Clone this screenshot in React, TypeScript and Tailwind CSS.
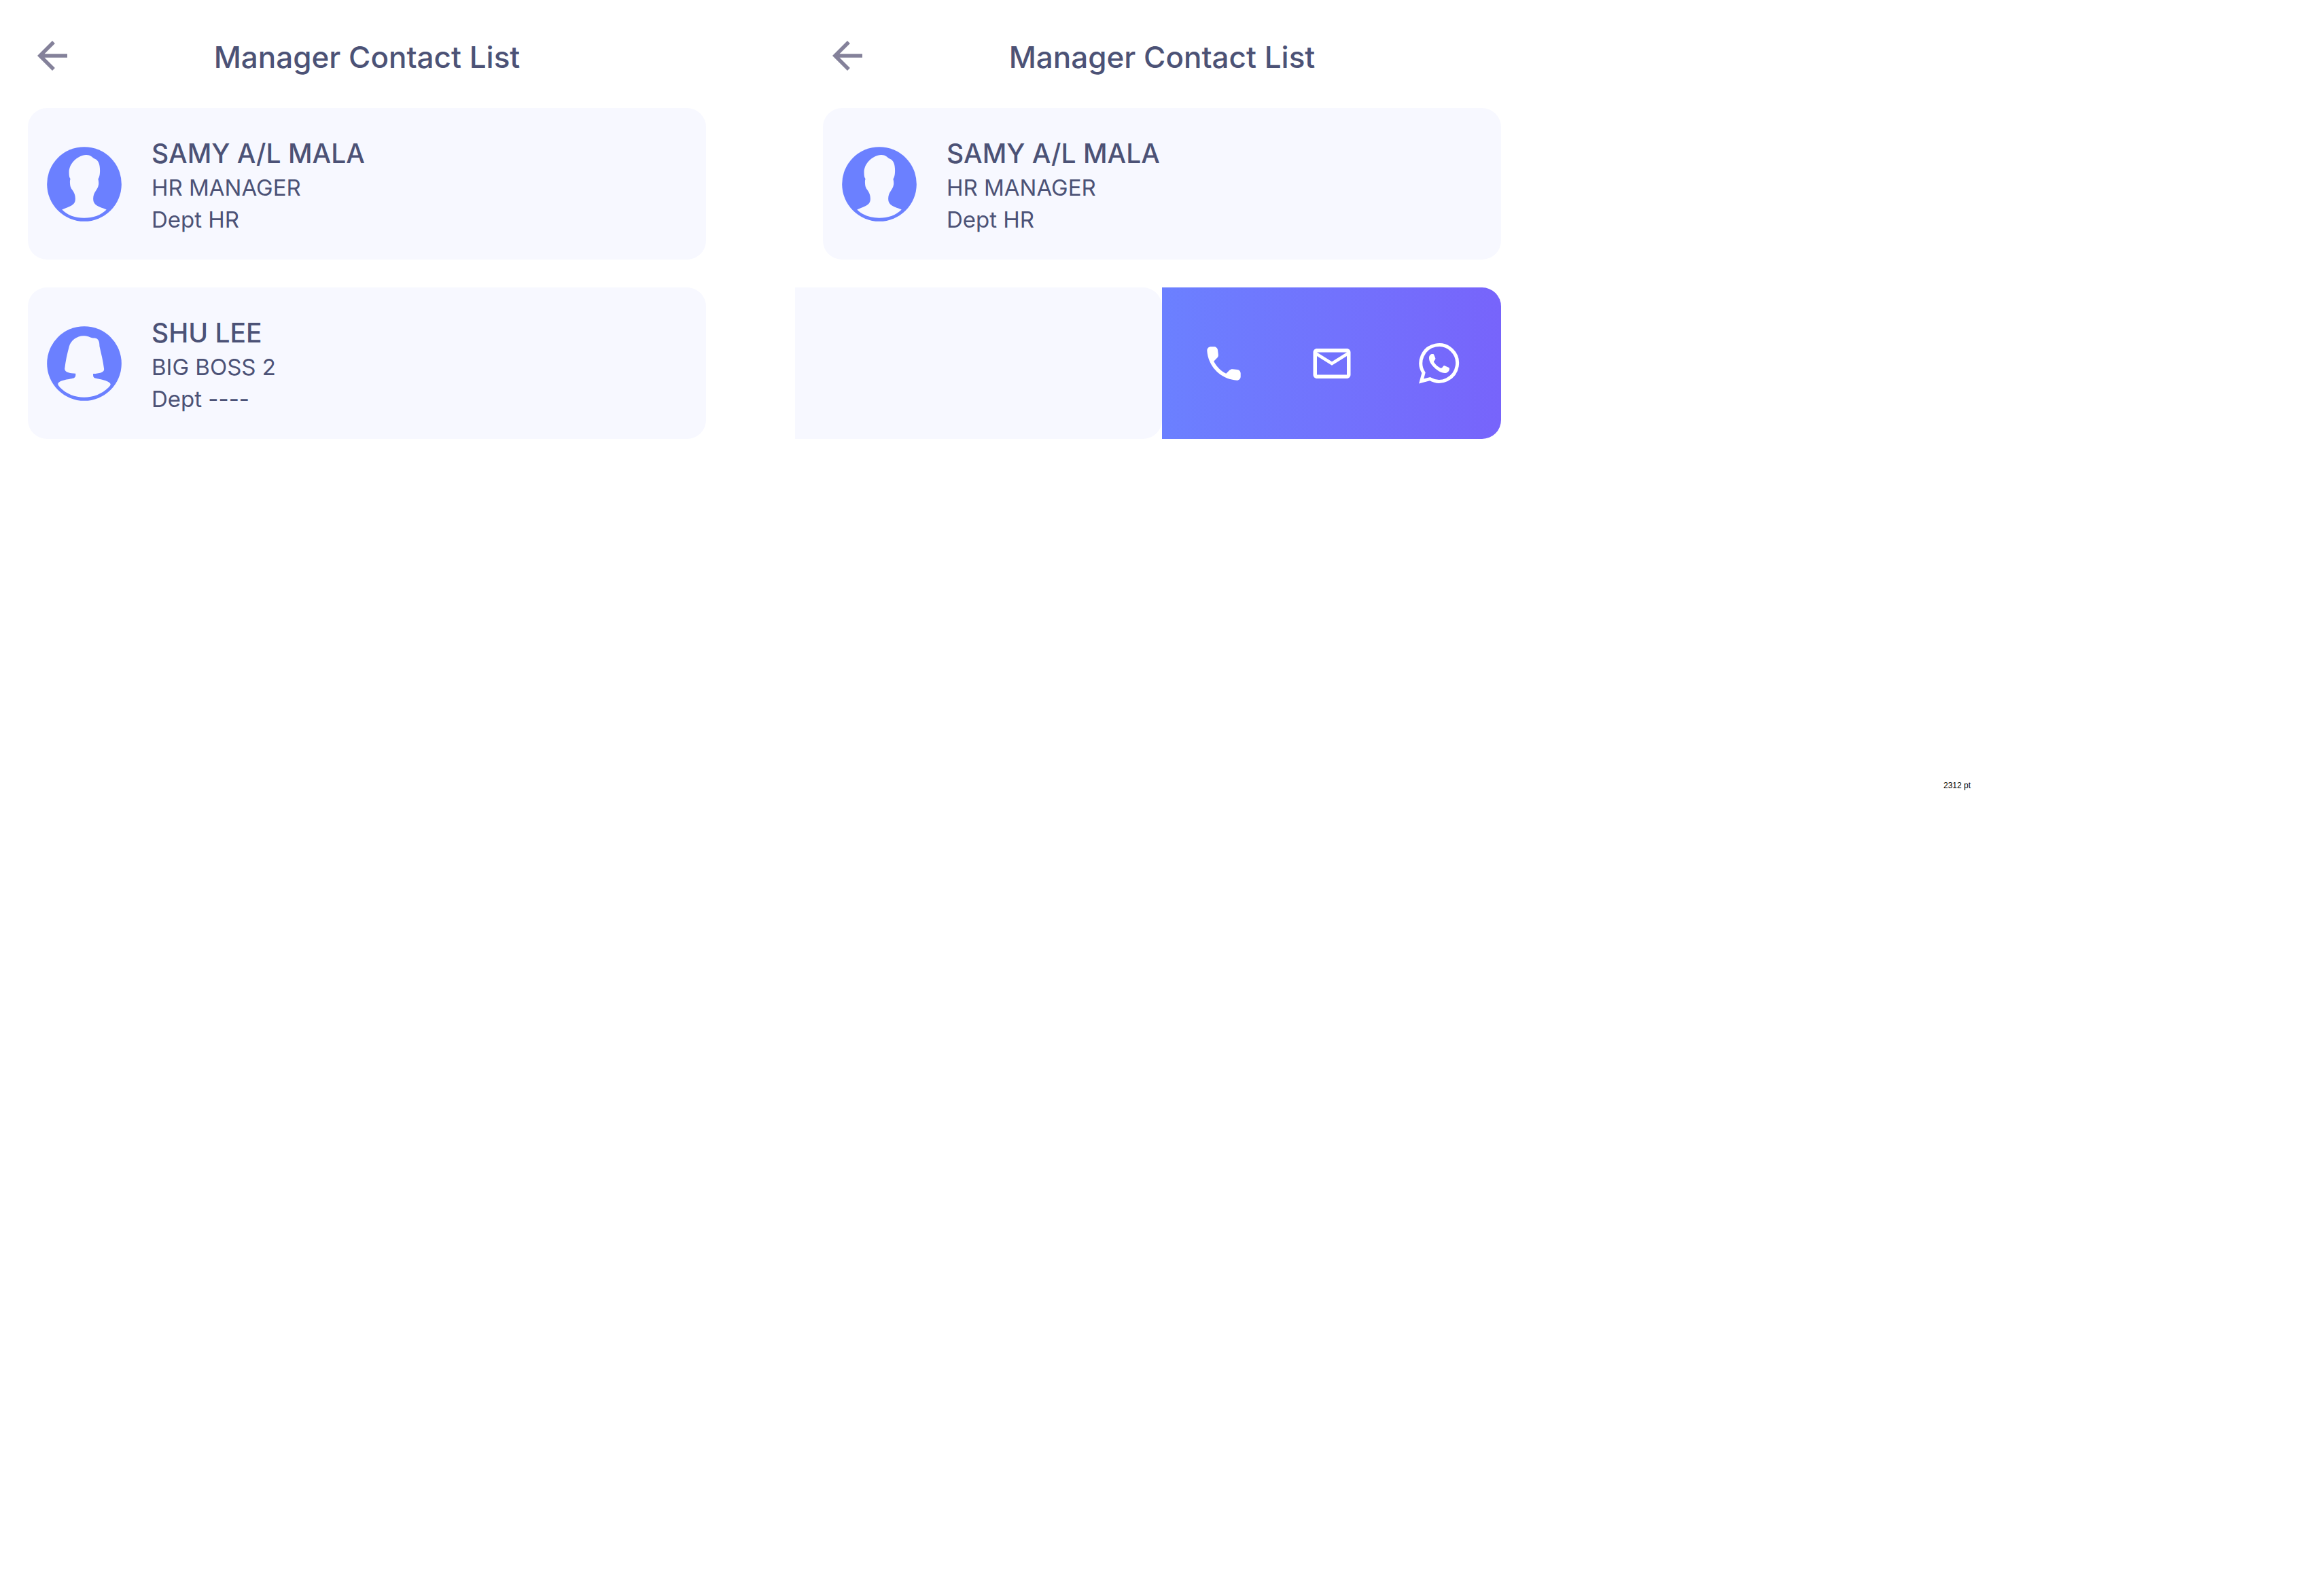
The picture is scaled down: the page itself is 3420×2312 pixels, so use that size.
import React from 'react';

type Contact = { name: string; role: string; dept: string; avatar: 'man' | 'woman' };

const samy: Contact = { name: 'SAMY A/L MALA', role: 'HR MANAGER', dept: 'Dept HR', avatar: 'man' };
const shu: Contact = { name: 'SHU LEE', role: 'BIG BOSS 2', dept: 'Dept ----', avatar: 'woman' };

const MAN =
  'M228 81C190 84 153 118 153 158C153 172 154 180 159 187C156 196 157 205 158 214C161 238 181 240 181 276C181 304 158 308 122 323C145 347 180 360 220 360C260 360 295 347 319 323C284 310 260 304 260 276C260 244 281 236 284 212C285 204 284 196 282 188C288 178 290 166 290 150C290 122 283 104 266 98C256 92 247 80 228 81Z';
const WOMAN =
  'M221 88C190 86 161 108 154 134C144 170 138 200 134 232C132 250 155 254 182 255C183 264 182 272 174 275C150 281 106 284 104 301C104 307 109 312 114 317C142 345 180 360 220 360C260 360 298 345 327 317C332 312 337 307 337 302C334 287 292 280 268 275C260 273 259 265 260 256C288 254 310 250 308 234C304 200 296 170 288 134C288 112 283 100 267 98C248 98 244 90 221 88Z';

function Avatar({ kind }: { kind: 'man' | 'woman' }) {
  return (
    <svg viewBox="55 45 331 331" className="size-[110px] shrink-0" aria-hidden="true">
      <circle cx="220.5" cy="210.5" r="165" fill="#6b80ff" />
      <path d={kind === 'man' ? MAN : WOMAN} fill="#f7f8ff" />
    </svg>
  );
}

function ContactCard({ contact }: { contact: Contact }) {
  return (
    <li className="mx-[41px] flex h-[223px] items-center gap-[44px] rounded-[28px] bg-[#f7f8ff] pl-[28px]">
      <Avatar kind={contact.avatar} />
      <div className="pt-1 text-[33px] leading-[47px] text-[#4c5276]">
        <h2 className="text-[39px] leading-[55px] font-medium">{contact.name}</h2>
        <p>{contact.role}</p>
        <p>{contact.dept}</p>
      </div>
    </li>
  );
}

function SwipedCard() {
  return (
    <li className="mr-[41px] flex h-[223px]">
      <div className="flex-1 rounded-r-[28px] bg-[#f7f8ff]" />
      <div className="flex w-[48%] items-center justify-between rounded-r-[28px] bg-linear-to-r from-[#6b80ff] to-[#7764fb] px-[58px] text-white">
        <button aria-label="Call">
          <svg viewBox="0 0 24 24" className="size-[66px]" fill="currentColor">
            <path d="M19.23 15.26l-2.54-.29c-.61-.07-1.21.14-1.64.57l-1.84 1.84c-2.83-1.44-5.15-3.75-6.59-6.59l1.85-1.85c.43-.43.64-1.03.57-1.64l-.29-2.52c-.12-1.01-.97-1.77-1.99-1.77H5.03c-1.13 0-2.07.94-2 2.07.53 8.54 7.36 15.36 15.89 15.89 1.13.07 2.07-.87 2.07-2v-1.73c.01-1.01-.75-1.86-1.76-1.98z" />
          </svg>
        </button>
        <button aria-label="Email">
          <svg viewBox="0 0 24 24" className="size-[66px]" fill="currentColor">
            <path d="M22 6c0-1.1-.9-2-2-2H4c-1.1 0-2 .9-2 2v12c0 1.1.9 2 2 2h16c1.1 0 2-.9 2-2V6zm-2 0l-8 5-8-5h16zm0 12H4V8l8 5 8-5v10z" />
          </svg>
        </button>
        <button aria-label="WhatsApp">
          <svg viewBox="14 6 198 198" className="size-[66px]" fill="none">
            <path
              d="M44 146A80.500 80.500 0 1 1 72 173L34 183Z"
              stroke="currentColor"
              strokeWidth="15"
              strokeLinejoin="miter"
            />
            <path
              d="M80 63C86 62 89 63 90 67L96 82C97 86 93 91 90 94C88 96 89 98 90 100C97 111 107 120 119 125C122 126 124 125 126 123L131 116C133 114 135 114 137 115L154 122C158 124 158 126 158 129C157 141 146 147 138 147C120 146 104 136 92 124C80 112 68 98 68 81C68 72 73 64 80 63Z"
              fill="currentColor"
            />
          </svg>
        </button>
      </div>
    </li>
  );
}

function Screen({ children }: { children: React.ReactNode }) {
  return (
    <section>
      <header className="grid grid-cols-[66px_1fr_66px] px-[44px] pt-[49px] pb-[40px]">
        <button aria-label="Back" className="self-start text-[#84819a]">
          <svg viewBox="0 0 24 24" className="size-[66px]" fill="currentColor">
            <path d="M20 11H7.83l5.59-5.59L12 4l-8 8 8 8 1.41-1.41L7.83 13H20v-2z" />
          </svg>
        </button>
        <h1 className="text-center text-[44px] leading-[70px] font-medium text-[#4c5276]">Manager Contact List</h1>
      </header>
      <ul className="flex flex-col gap-[41px]">{children}</ul>
    </section>
  );
}

export default function App() {
  return (
    <main className="grid min-h-screen grid-cols-3 gap-[90px] bg-white font-['Inter',sans-serif] [font-optical-sizing:none]">
      <Screen>
        <ContactCard contact={samy} />
        <ContactCard contact={shu} />
      </Screen>
      <Screen>
        <ContactCard contact={samy} />
        <SwipedCard />
      </Screen>
      <p className="self-center text-center font-['Liberation_Sans',sans-serif] text-xs text-black">2312 pt</p>
    </main>
  );
}
